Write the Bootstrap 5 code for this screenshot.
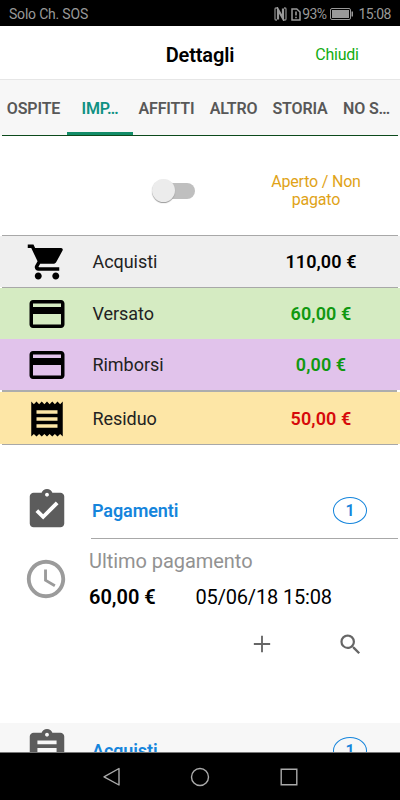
<!DOCTYPE html>
<html lang="it">
<head>
<meta charset="utf-8">
<meta name="viewport" content="width=device-width, initial-scale=1">
<title>Dettagli</title>
<link href="https://cdn.jsdelivr.net/npm/bootstrap@5.3.0/dist/css/bootstrap.min.css" rel="stylesheet">
<style>
body{font-family:Roboto,"Liberation Sans",sans-serif;color:#000;background:#fff;letter-spacing:0}
svg{display:block;flex:none}
.screen{width:400px;height:800px}
.statusbar{height:26px;background:#000;color:#999;font-size:14px;letter-spacing:-.2px;padding:2px 9px 0 9px}
.percent{margin-left:1px;letter-spacing:-.6px}
.clocktime{margin-left:4px;letter-spacing:-.45px}
.titlebar{height:54px;border-bottom:1px solid #e6e6e6;display:grid;grid-template-columns:126px 148px 126px;padding-top:4px}
.titlebar h1{font-size:20px;font-weight:600;letter-spacing:-.15px}
.titlebar a{font-size:16px;letter-spacing:-.25px;color:#12ac12}
.tabs{height:56px;background:#f7f7f7;display:grid;grid-template-columns:67px 66px 67px 67px 66px 67px;font-size:16px;font-weight:600;color:#585858}
.tabs a{color:inherit;letter-spacing:-.15px;padding-top:2px;margin-bottom:1px;box-shadow:0 1px #0c4a1c}
.tabs a:first-child{margin-left:2px;padding-right:2px}
.tabs a:last-child{margin-right:2px;padding-left:2px}
.tabs a.active{color:#0f9183;border-bottom:3px solid #128c68;padding-top:5px}
.state{height:99px;display:grid;grid-template-columns:232px 168px}
.switch{width:44px;height:24px;margin-left:151px;margin-top:11px}
.track{width:30px;height:16px;border-radius:8px;background:#bfbfbf;margin-left:14px}
.knob{width:23px;height:23px;border-radius:50%;background:#ececec;box-shadow:0 1px 1px #999;left:1px;top:0}
.state p{font-size:16px;letter-spacing:-.2px;line-height:18px;color:#dfa318;margin:10px 0 0}
.money{display:grid;grid-template-columns:92px 150px 158px;height:51px;font-size:18px}
.money svg{margin-left:26px}
.money b{font-weight:600;letter-spacing:.1px}
.money span{color:#222;letter-spacing:-.05px;padding-left:.5px}
.green{color:#109810}.red{color:#d60a0a}
.rule{height:1px;background:#a8a8a8;margin:0 2px}
.rule2{height:2px;background:#adadad;margin:0 3px 0 2px}
.buy{background:#efefef}.paid{background:#d5ebc2}.back{background:#e1c3eb}
.rest{background:#fde6a6;height:52px;padding-top:1px}
.section-head{height:55px;display:grid;grid-template-columns:92px 241px 34px;color:#1585dc;font-size:18px;letter-spacing:-.1px;font-weight:600}
.section-head svg{margin-left:24px;align-self:start;margin-top:4px}
.count{width:34px;height:27px;border:1px solid #1585dc;border-radius:50%;font-size:16px;margin-top:-1px;padding-top:1px}
.line{height:1px;background:#a8a8a8;margin:0 2px 0 91px}
.last{height:184px;display:grid;grid-template-columns:89px 1fr}
.last .clock{margin:17px 0 0 23px}
.label{font-size:20px;line-height:24px;color:#929292;margin-top:10px;letter-spacing:-.05px}
.values{font-size:20px;line-height:24px;margin-top:12px;letter-spacing:-.17px}
.values b{width:106.5px;font-weight:600;letter-spacing:0}
.tools{margin:21px 0 0 159px;gap:61px}
.next{height:29px;background:#f7f7f7}
.navkeys{height:48px;background:#000;border-top:1px solid #777;gap:65px}
.navkeys svg:first-child{margin-left:-1px}
</style>
<script src="https://cdn.jsdelivr.net/npm/bootstrap@5.3.0/dist/js/bootstrap.bundle.min.js"></script>
</head>
<body>
<div class="screen d-flex flex-column overflow-hidden">
<div class="statusbar d-flex align-items-center flex-shrink-0">
<span class="me-auto">Solo Ch. SOS</span>
<svg width="13" height="14" viewBox="0 0 13 14"><path d="M3 1H2Q1 1 1 2v10q0 1 1 1h1M10 1h1q1 0 1 1v10q0 1-1 1h-1" fill="none" stroke="#888" stroke-width="1.3"/><path d="M4 12.500V2.500l5 9v-10" fill="none" stroke="#999" stroke-width="2.200"/></svg>
<svg width="10" height="13" viewBox="0 0 10 13" class="ms-1"><path d="M1 1h4.800L9 4v8H1z" fill="none" stroke="#999" stroke-width="1.500"/><path d="M5 3.500v4M5 8.800v1.500" stroke="#999" stroke-width="1.600"/></svg>
<span class="percent">93%</span>
<svg width="24" height="12" viewBox="0 0 24 12" class="ms-1"><rect x=".5" y=".5" width="20" height="11" rx="1.500" fill="none" stroke="#999"/><path d="M2 2h17v8H2zM21.500 3.500H23v5h-1.500z" fill="#999"/></svg>
<span class="clocktime">15:08</span>
</div>
<header class="titlebar align-items-center text-center flex-shrink-0">
<span></span><h1 class="m-0">Dettagli</h1><a class="text-decoration-none">Chiudi</a>
</header>
<nav class="tabs text-center flex-shrink-0">
<a class="d-flex align-items-center justify-content-center text-decoration-none">OSPITE</a>
<a class="active d-flex align-items-center justify-content-center text-decoration-none">IMP…</a>
<a class="d-flex align-items-center justify-content-center text-decoration-none">AFFITTI</a>
<a class="d-flex align-items-center justify-content-center text-decoration-none">ALTRO</a>
<a class="d-flex align-items-center justify-content-center text-decoration-none">STORIA</a>
<a class="d-flex align-items-center justify-content-center text-decoration-none">NO S…</a>
</nav>
<div class="state align-items-center flex-shrink-0">
<div class="switch position-relative d-flex align-items-center"><div class="track"></div><div class="knob position-absolute"></div></div>
<p class="text-center">Aperto / Non<br>pagato</p>
</div>
<div class="rule flex-shrink-0"></div>
<div class="money buy align-items-center flex-shrink-0">
<svg width="42" height="42" viewBox="0 0 24 24"><path d="M7 18c-1.100 0-1.990.9-1.990 2S5.900 22 7 22s2-.9 2-2-.9-2-2-2zM1 2v2h2l3.600 7.590-1.350 2.450c-.16.28-.25.61-.25.96 0 1.100.9 2 2 2h12v-2H7.420c-.14 0-.25-.11-.25-.25l.03-.12.9-1.630h7.450c.75 0 1.410-.41 1.750-1.030l3.580-6.490A1 1 0 0 0 20 4H5.210l-.94-2H1zm16 16c-1.100 0-1.990.9-1.990 2s.89 2 1.990 2 2-.9 2-2-.9-2-2-2z"/></svg>
<span>Acquisti</span><b class="text-center">110,00 €</b></div>
<div class="rule flex-shrink-0"></div>
<div class="money paid align-items-center flex-shrink-0">
<svg width="42" height="42" viewBox="0 0 24 24"><path d="M20 4H4c-1.110 0-1.990.89-1.990 2L2 18c0 1.110.89 2 2 2h16c1.110 0 2-.89 2-2V6c0-1.110-.89-2-2-2zm0 14H4v-6h16v6zm0-10H4V6h16v2z"/></svg>
<span>Versato</span><b class="text-center green">60,00 €</b></div>
<div class="money back align-items-center flex-shrink-0">
<svg width="42" height="42" viewBox="0 0 24 24"><path d="M20 4H4c-1.110 0-1.990.89-1.990 2L2 18c0 1.110.89 2 2 2h16c1.110 0 2-.89 2-2V6c0-1.110-.89-2-2-2zm0 14H4v-6h16v6zm0-10H4V6h16v2z"/></svg>
<span>Rimborsi</span><b class="text-center green">0,00 €</b></div>
<div class="rule2 flex-shrink-0"></div>
<div class="money rest align-items-center flex-shrink-0">
<svg width="42" height="42" viewBox="0 0 24 24"><path d="M18 17H6v-2h12v2zm0-4H6v-2h12v2zm0-4H6V7h12v2zM3 22l1.500-1.500L6 22l1.500-1.500L9 22l1.500-1.500L12 22l1.500-1.500L15 22l1.500-1.500L18 22l1.500-1.500L21 22V2l-1.500 1.500L18 2l-1.500 1.500L15 2l-1.500 1.500L12 2l-1.500 1.500L9 2 7.500 3.500 6 2 4.500 3.500 3 2v20z"/></svg>
<span>Residuo</span><b class="text-center red">50,00 €</b></div>
<div class="rule flex-shrink-0"></div>
<section class="flex-shrink-0" style="padding-top:38px">
<div class="section-head align-items-center">
<svg width="46" height="46" viewBox="0 0 24 24" fill="#5c5c5c"><path d="M19 3h-4.180C14.400 1.840 13.300 1 12 1s-2.400.84-2.820 2H5c-1.100 0-2 .9-2 2v14c0 1.100.9 2 2 2h14c1.100 0 2-.9 2-2V5c0-1.100-.9-2-2-2zm-7 0c.55 0 1 .45 1 1s-.45 1-1 1-1-.45-1-1 .45-1 1-1zm-2 14l-4-4 1.410-1.410L10 14.170l6.590-6.590L18 9l-8 8z"/></svg>
<span>Pagamenti</span><span class="count d-flex align-items-center justify-content-center">1</span></div>
<div class="line"></div>
<div class="last">
<svg class="clock" width="46" height="46" viewBox="0 0 24 24" fill="#9b9b9b"><path d="M11.990 2C6.470 2 2 6.480 2 12s4.470 10 9.990 10C17.520 22 22 17.520 22 12S17.520 2 11.990 2zM12 20c-4.420 0-8-3.580-8-8s3.580-8 8-8 8 3.580 8 8-3.580 8-8 8zm.5-13H11v6l5.250 3.150.75-1.230-4.500-2.670z"/></svg>
<div>
<div class="label">Ultimo pagamento</div>
<div class="values d-flex"><b>60,00 €</b><span>05/06/18 15:08</span></div>
<div class="tools d-flex align-items-center">
<svg width="28" height="28" viewBox="0 0 24 24" fill="#666"><path d="M19 12.800h-6.200V19h-1.600v-6.200H5v-1.600h6.200V5h1.600v6.200H19z"/></svg>
<svg width="27" height="27" viewBox="0 0 24 24" fill="#666"><path d="M15.500 14h-.79l-.28-.27A6.471 6.471 0 0 0 16 9.500 6.500 6.500 0 1 0 9.500 16c1.610 0 3.090-.59 4.230-1.570l.27.28v.79l5 4.990L20.490 19l-4.990-5zm-6 0C7.010 14 5 11.990 5 9.500S7.010 5 9.500 5 14 7.010 14 9.500 11.990 14 9.500 14z"/></svg>
</div></div></div>
</section>
<section class="next overflow-hidden flex-shrink-0">
<div class="section-head align-items-center">
<svg width="46" height="46" viewBox="0 0 24 24" fill="#5c5c5c"><path d="M19 3h-4.180C14.400 1.840 13.300 1 12 1s-2.400.84-2.820 2H5c-1.100 0-2 .9-2 2v14c0 1.100.9 2 2 2h14c1.100 0 2-.9 2-2V5c0-1.100-.9-2-2-2zm-7 0c.55 0 1 .45 1 1s-.45 1-1 1-1-.45-1-1 .45-1 1-1zm5 6H7V7h10zM17 13H7v-2h10zM14 17H7v-2h7z"/></svg>
<span>Acquisti</span><span class="count d-flex align-items-center justify-content-center">1</span></div>
</section>
<div class="navkeys d-flex justify-content-center align-items-center flex-shrink-0">
<svg width="24" height="22" viewBox="0 0 24 22" fill="none" stroke="#aaa" stroke-width="1.400"><path d="M19 2.500v16.500L4 10.800z" stroke-linejoin="round"/></svg>
<svg width="22" height="22" viewBox="0 0 22 22" fill="none" stroke="#aaa" stroke-width="1.400"><circle cx="11" cy="11" r="8.500"/></svg>
<svg width="24" height="22" viewBox="0 0 24 22" fill="none" stroke="#aaa" stroke-width="1.400"><path d="M5.200 3.200h15.600v15.600H5.200z"/></svg>
</div>
</div>
</body>
</html>
